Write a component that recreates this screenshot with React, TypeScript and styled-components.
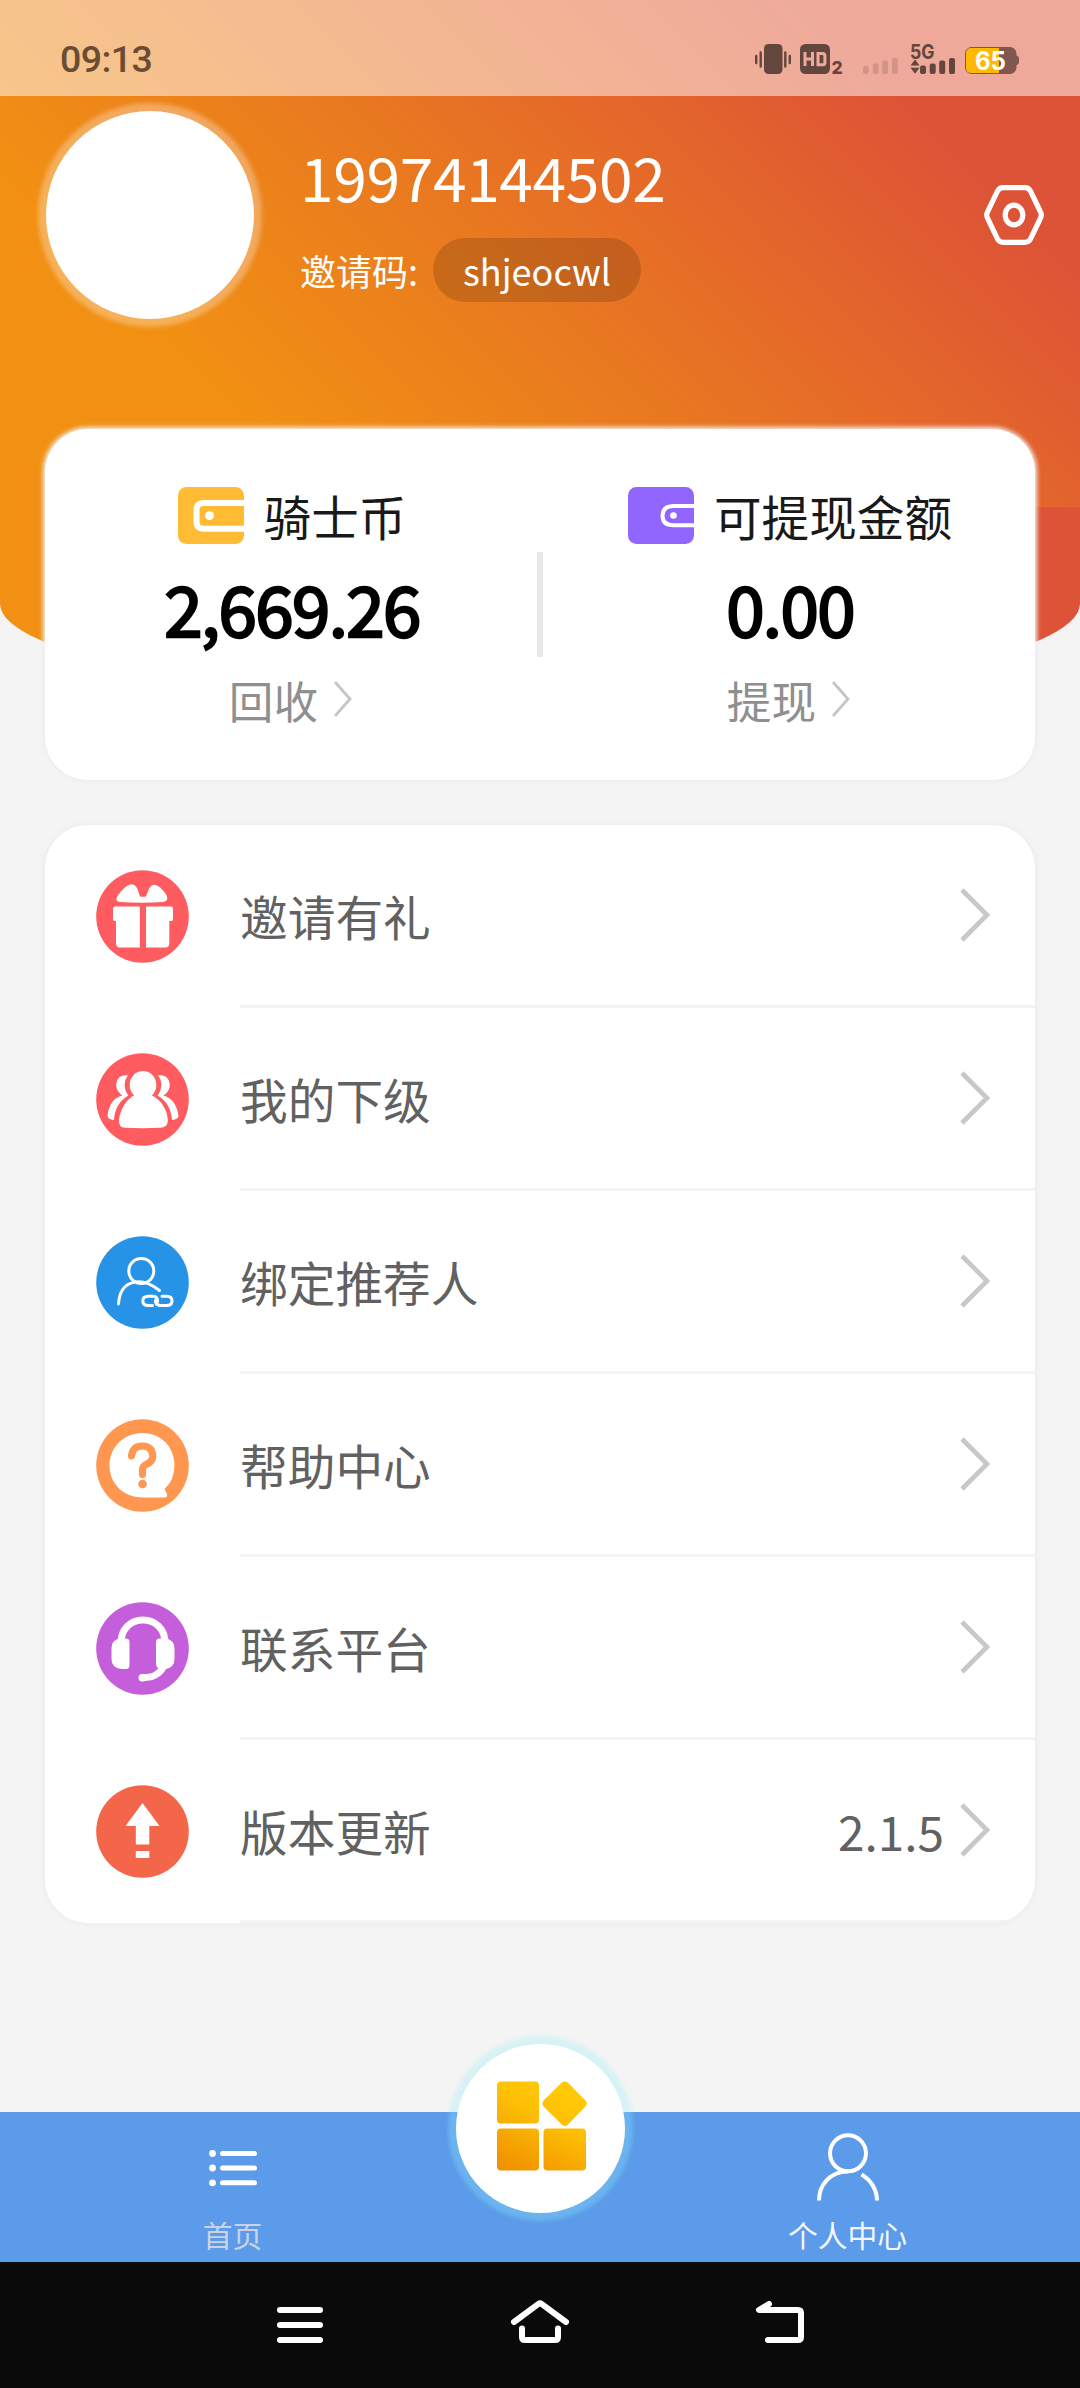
import React from 'react';
import styled, { createGlobalStyle } from 'styled-components';

const GlobalStyle = createGlobalStyle`
  * { box-sizing: border-box; }
  body {
    margin: 0;
    background: #f5f5f5;
    font-family: 'Noto Sans CJK SC', 'Noto Sans', sans-serif;
  }
  svg { display: block; flex: none; }
`;

const Screen = styled.div`
  width: 1080px;
  height: 2388px;
  display: flex;
  flex-direction: column;
  background: #f4f4f4;
  overflow: hidden;
`;

const Header = styled.header`
  flex: none;
  height: 507px;
  background: linear-gradient(45deg, #f29013 21%, #e97a1f 46%, #e4662b 65%, #dd5337 83%);
`;

const StatusBar = styled.div`
  height: 96px;
  padding: 24px 61px 0 60px;
  display: flex;
  justify-content: space-between;
  background: rgba(255, 255, 255, 0.5);
`;

const Clock = styled.span`
  font: 500 37.5px/71px Roboto, sans-serif;
  letter-spacing: -0.6px;
  color: #694c31;
`;

const HeaderCurve = styled.div`
  flex: none;
  height: 193px;
  border-radius: 0 0 50% 50%;
  background: linear-gradient(45deg, #f29013 22%, #dd5337 83%);
`;

const Profile = styled.section`
  display: flex;
  align-items: center;
  height: 237px;
  padding: 0 36px 0 46px;
`;

const Avatar = styled.div`
  width: 208px;
  height: 208px;
  border-radius: 50%;
  background: #fff;
  box-shadow: 0 0 4px 8px rgba(255, 255, 255, 0.3);
`;

const Identity = styled.div`
  flex: 1;
  margin-left: 46px;
  padding-top: 4px;
`;

const Phone = styled.div`
  font-size: 60.5px;
  line-height: 88px;
  letter-spacing: -0.35px;
  color: #fff;
`;

const InviteRow = styled.div`
  display: flex;
  align-items: center;
  margin-top: 18px;
  font-size: 36px;
  color: #fff;
`;

const InviteCode = styled.span`
  height: 64px;
  margin-left: 15px;
  padding: 0 30px;
  border-radius: 32px;
  background: rgba(0, 0, 0, 0.15);
  font-size: 36px;
  line-height: 65px;
`;

const BalanceCard = styled.section`
  flex: none;
  width: 990px;
  height: 351px;
  margin: -271px auto 0;
  display: flex;
  align-items: center;
  border-radius: 43px;
  background: #fff;
  box-shadow: 0 0 4px 2px #eee;
`;

const Divider = styled.div`
  width: 6px;
  height: 105px;
  background: #e9e9e9;
`;

const Balance = styled.div`
  flex: 1;
  height: 100%;
  padding: 51px 0 0 2px;
  display: flex;
  flex-direction: column;
  align-items: center;
`;

const BalanceTitle = styled.div`
  display: flex;
  align-items: center;
  gap: 20px;
  height: 70px;
  font-size: 47.6px;
  line-height: 70px;
  color: #191919;
`;

const BalanceName = styled.span`
  padding-top: 2px;
`;

const Amount = styled.div`
  margin-top: 9px;
  height: 96px;
  font-size: 69px;
  line-height: 96px;
  letter-spacing: -1.6px;
  color: #000;
  -webkit-text-stroke: 2.4px #000;
`;

const BalanceAction = styled.div`
  display: flex;
  align-items: center;
  gap: 16px;
  margin-top: 13px;
  padding-right: 3px;
  font-size: 44.64px;
  line-height: 64px;
  color: #8f8f8f;
`;

const MenuCard = styled.nav`
  flex: none;
  width: 990px;
  margin: 45px auto 0;
  border-radius: 43px;
  background: #fff;
  box-shadow: 0 0 4px 2px #eee;
  overflow: hidden;
`;

const MenuRow = styled.div`
  display: flex;
  align-items: stretch;
  height: 183px;
`;

const MenuIcon = styled.div`
  width: 195px;
  padding: 45px 0 0 51px;
`;

const MenuBody = styled.div`
  flex: 1;
  display: flex;
  align-items: center;
  padding-right: 45px;
  border-bottom: 3px solid #f4f4f4;
  font-size: 47.7px;
  color: #616161;
`;

const MenuLabel = styled.span`
  flex: 1;
  padding-top: 1px;
`;

const MenuValue = styled.span`
  margin-right: 15px;
  padding-top: 1px;
`;

const TabBar = styled.footer`
  flex: none;
  display: flex;
  height: 150px;
  margin-top: auto;
  background: #5b9bea;
`;

const Tab = styled.div<{ $active?: boolean }>`
  flex: 1;
  display: flex;
  flex-direction: column;
  justify-content: space-between;
  align-items: center;
  padding: 18px 0 6px;
  font-size: 29.8px;
  line-height: 44px;
  color: ${(p) => (p.$active ? '#f2f7fd' : '#c9d3e3')};
`;

const CenterTab = styled.div`
  width: 150px;
  display: flex;
  justify-content: center;
`;

const CenterButton = styled.button`
  flex: none;
  width: 169px;
  height: 169px;
  margin-top: -68px;
  padding: 0 0 5px 3px;
  border: 0;
  border-radius: 50%;
  display: flex;
  align-items: center;
  justify-content: center;
  background: #fff;
  box-shadow: 0 0 4px 8px rgba(145, 240, 252, 0.3);
`;

const SystemNav = styled.div`
  flex: none;
  height: 126px;
  display: flex;
  align-items: center;
  justify-content: center;
  gap: 180px;
  background: #0a0a0a;
`;

const Chevron = ({ small }: { small?: boolean }) =>
  small ? (
    <svg width="18" height="38" viewBox="0 0 18 38" fill="none" stroke="#c5c5c5" strokeWidth="2.8">
      <path d="M1 1L16 18L1 35" />
    </svg>
  ) : (
    <svg width="31" height="54" viewBox="0 0 31 54" fill="none" stroke="#c8c8c8" strokeWidth="4.6">
      <path d="M3 2L28 27L3 52" />
    </svg>
  );

const StatusIcons = () => (
  <svg width="264" height="70" viewBox="756 24 264 70" fill="#63463d">
    <rect x="765" y="44" width="18.5" height="30" rx="4.5" />
    <path d="M757.2 56v7M761.7 52.5v14M786.3 52.5v14M790.8 56v7" stroke="#63463d" strokeWidth="2.4" strokeLinecap="round" />
    <rect x="801" y="44" width="30" height="30" rx="5.5" />
    <path d="M806 52v14M813.5 52v14M806 59h7.5M819 53.4h4.5q2.4 0 2.4 2.4v6.6q0 2.4-2.4 2.4H819z" fill="none" stroke="#efaa9b" strokeWidth="3" />
    <text x="832.5" y="73.5" fontFamily="Inter" fontWeight="800" fontSize="17.5">2</text>
    <g fill="#d39388">
      <rect x="864" y="66" width="5.8" height="8" rx="2" />
      <rect x="873.8" y="63.5" width="5.8" height="10.5" rx="2" />
      <rect x="883.2" y="60.5" width="5.8" height="13.5" rx="2" />
      <rect x="893" y="58" width="5.8" height="16" rx="2" />
    </g>
    <text x="911" y="58.8" fontFamily="Inter" fontWeight="700" fontSize="20" textLength="24.5" lengthAdjust="spacingAndGlyphs">5G</text>
    <path d="M911.5 65.5L916 59.5L920.5 65.5zM911.5 67.8L916 73.8L920.5 67.8z" />
    <rect x="921" y="65.5" width="6" height="8.5" rx="2" />
    <rect x="930.7" y="63.5" width="6" height="10.5" rx="2" />
    <rect x="940.2" y="60.5" width="6" height="13.5" rx="2" />
    <rect x="950" y="58" width="6" height="16" rx="2" />
    <rect x="966" y="47" width="51.5" height="27" rx="6.5" fill="#80564f" />
    <path d="M1017 55.5q3 .5 3 3v3.5q0 2.5-3 3z" fill="#80564f" />
    <path d="M1000 48V73H972.5q-5.5 0-5.5-5.5v-14q0-5.5 5.5-5.5z" fill="#feb902" />
    <text x="976" y="70" fill="#fff" fontFamily="Inter" fontWeight="700" fontSize="25.5" textLength="31" lengthAdjust="spacingAndGlyphs">65</text>
  </svg>
);

const SettingsIcon = () => (
  <svg width="60" height="60" viewBox="0 0 60 60" fill="none" stroke="#fff" strokeWidth="5.2">
    <path d="M19 2.6H41Q44.5 2.6 46.3 5.7L56.3 26.5Q58.3 30 56.3 33.5L46.3 54.3Q44.5 57.4 41 57.4H19Q15.5 57.4 13.7 54.3L3.7 33.5Q1.7 30 3.7 26.5L13.7 5.7Q15.5 2.6 19 2.6Z" />
    <ellipse cx="30" cy="30" rx="8.8" ry="9.9" />
  </svg>
);

const CoinWallet = () => (
  <svg width="66" height="57" viewBox="0 0 66 57">
    <rect width="66" height="57" rx="8.5" fill="#ffbb33" />
    <path d="M66 16H25.5Q18.5 16 18.5 23V34.5Q18.5 41.7 25.5 41.7H66" fill="none" stroke="#fff" strokeWidth="6" />
    <circle cx="31.5" cy="28.7" r="4.4" fill="#fff" />
  </svg>
);

const CashWallet = () => (
  <svg width="66" height="57" viewBox="0 0 66 57">
    <rect width="66" height="57" rx="8.5" fill="#9066ff" />
    <path d="M66 19H45.5Q34.5 19 34.5 28.7Q34.5 38.2 45.5 38.2H66" fill="none" stroke="#fff" strokeWidth="4" />
    <circle cx="45.5" cy="28.5" r="3.3" fill="#fff" />
  </svg>
);

const Disc = ({ color, children }: { color: string; children: React.ReactNode }) => (
  <svg width="93" height="93" viewBox="0 0 93 93" fill="#fff">
    <circle cx="46.5" cy="46.5" r="46.3" fill={color} />
    {children}
  </svg>
);

const GiftIcon = () => (
  <Disc color="#ff5c62">
    <path d="M24 32Q18 31 21.5 26Q33 10 39.5 16C42.5 19 42.5 24 44.5 26.8H49.5C51.5 24 52 19 55 16Q61 11 70.5 25Q73 31 67 32Q46 33.5 24 32Z" />
    <path d="M19 36.5H43.8V77.5H24Q20 77.5 20 73V51H18.5Q17 51 17 49V38.5Q17 36.5 19 36.5Z" />
    <path d="M50 36.5H75Q77 36.5 77 38.5V49Q77 51 75.5 51H73.3V73Q73.3 77.5 69.5 77.5H50Z" />
  </Disc>
);

const TeamIcon = () => (
  <Disc color="#ff5c62">
    <path d="M32 22.5C22 20 17.5 31 22 38Q24 41 26.5 42.5C14.5 45 12 58 11.5 63Q12 66.5 18 67C18.5 56 24 47 32.5 42.5C27 36 28 27 32 22.5Z" />
    <path d="M62 22.5C72 20 76.5 31 72 38Q70 41 67.5 42.5C79.5 46 82 58 82.5 63Q82 66.5 76 67C75.5 56 70 47 61.5 42.5C67 36 66 27 62 22.5Z" />
    <ellipse cx="47" cy="32" rx="13.3" ry="14" />
    <path d="M39 42H55C68 48 72 61 71.8 68Q71.5 74.5 64 74.8Q47 75.5 29 74.8Q22.5 74.5 23 67C24 57 30 46 39 42Z" />
  </Disc>
);

const LinkUserIcon = () => (
  <Disc color="#2793e6">
    <g fill="none" stroke="#fff" strokeWidth="3" strokeLinecap="round">
      <circle cx="45.3" cy="35" r="12.5" />
      <path d="M22.5 68C24 43.5 45 40 63.5 54.5" />
      <path d="M56.5 69.5H52.5Q46.8 69.5 46.8 65Q46.8 60.2 52.5 60.2H57Q60.5 60.2 61.5 63.5Q62 65.5 60.5 66.5" />
      <path d="M66 60.2H70.5Q76 60.2 76 65Q76 69.5 70.5 69.5H65Q60.5 69.5 59.5 66Q59.2 64.5 60 63.8" />
    </g>
  </Disc>
);

const HelpIcon = () => (
  <Disc color="#ff9751">
    <path d="M46.5 14C65 14 78.5 28 78.5 46.5Q78.5 61 68.5 70L71 75Q71.5 78.5 69 78.5H46.5C27 78.5 13.5 64 13.5 46.5C13.5 28 28 14 46.5 14Z" />
    <path d="M35.5 37Q36.5 27 46.5 27Q56.5 27.5 56.8 37Q57 42.5 50 45.5Q46.5 47 46.5 51V55.5" fill="none" stroke="#ff9751" strokeWidth="7" strokeLinecap="round" />
    <circle cx="46.5" cy="65" r="4.3" fill="#ff9751" />
  </Disc>
);

const SupportIcon = () => (
  <Disc color="#c55edb">
    <path d="M25 42C24 10 70 10 69 42" fill="none" stroke="#fff" strokeWidth="7" />
    <path d="M23.5 36.5H30Q33.5 36.5 33.5 40V63Q33.5 67 30 67H26Q15.5 66.5 15.5 57V46Q15.5 38 23.5 36.5ZM63.5 36.5H70Q78.5 38 78.5 46V57Q78.5 65 70 67C67 73 60 78.5 50.5 78.8Q48.5 79.5 46 79.5Q42.5 79.3 42.5 75.5Q42.5 72 46 72H50C56 72 60 69 62.5 66Q60 65 60 62V40Q60 36.5 63.5 36.5Z" />
  </Disc>
);

const UpdateIcon = () => (
  <Disc color="#f46649">
    <path d="M46.5 18L63.5 41H53.3V59.5H39.8V41H29.5ZM39.8 66H53.3V73H39.8Z" />
  </Disc>
);

const ListIcon = () => (
  <svg width="48" height="64" viewBox="1.5 0 48 64" fill="#fff">
    {[23.5, 38, 52.8].map((y) => (
      <g key={y}>
        <circle cx="5" cy={y} r="3.4" />
        <rect x="12.5" y={y - 2.5} width="37" height="5" rx="2.5" />
      </g>
    ))}
  </svg>
);

const PersonIcon = () => (
  <svg width="64" height="72" viewBox="0 0 64 72" fill="none" stroke="#fff" strokeWidth="4">
    <circle cx="32" cy="23.3" r="18" />
    <path d="M3 70.5C3 55 14 41.5 32 41.5M45.5 44.5C55 50 61 60 61 70.5" />
  </svg>
);

const AppsIcon = () => (
  <svg width="90" height="90" viewBox="0 0 90 90">
    <defs>
      <linearGradient id="apps" gradientUnits="userSpaceOnUse" x1="62" y1="12" x2="22" y2="90">
        <stop offset="0" stopColor="#ffc907" />
        <stop offset="0.35" stopColor="#fdbd05" />
        <stop offset="1" stopColor="#f09300" />
      </linearGradient>
    </defs>
    <g fill="url(#apps)">
      <rect x="0" y="0.5" width="42" height="42" rx="4" />
      <rect x="0" y="47.5" width="42" height="42" rx="4" />
      <rect x="46.5" y="47.5" width="42.5" height="42" rx="4" />
      <path d="M64.8 1.5Q67.8-.5 70.8 1.5L88.5 19.5Q91 22.5 88.5 25.5L71 43.5Q67.8 46.5 64.8 43.5L46.5 25.5Q44.5 22.5 46.5 19.5Z" />
    </g>
  </svg>
);

const NavIcon = styled.svg`
  fill: none;
  stroke: #fff;
  stroke-width: 6;
  stroke-linecap: round;
  stroke-linejoin: round;
`;

const MENU = [
  { label: '邀请有礼', icon: <GiftIcon /> },
  { label: '我的下级', icon: <TeamIcon /> },
  { label: '绑定推荐人', icon: <LinkUserIcon /> },
  { label: '帮助中心', icon: <HelpIcon /> },
  { label: '联系平台', icon: <SupportIcon /> },
  { label: '版本更新', icon: <UpdateIcon />, value: '2.1.5' },
];

export default function App() {
  return (
    <Screen>
      <GlobalStyle />
      <Header>
        <StatusBar>
          <Clock>09:13</Clock>
          <StatusIcons />
        </StatusBar>
        <Profile>
          <Avatar />
          <Identity>
            <Phone>19974144502</Phone>
            <InviteRow>
              邀请码:
              <InviteCode>shjeocwl</InviteCode>
            </InviteRow>
          </Identity>
          <SettingsIcon />
        </Profile>
      </Header>
      <HeaderCurve />

      <BalanceCard>
        <Balance>
          <BalanceTitle>
            <CoinWallet />
            <BalanceName>骑士币</BalanceName>
          </BalanceTitle>
          <Amount>2,669.26</Amount>
          <BalanceAction>
            回收
            <Chevron small />
          </BalanceAction>
        </Balance>
        <Divider />
        <Balance>
          <BalanceTitle>
            <CashWallet />
            <BalanceName>可提现金额</BalanceName>
          </BalanceTitle>
          <Amount>0.00</Amount>
          <BalanceAction>
            提现
            <Chevron small />
          </BalanceAction>
        </Balance>
      </BalanceCard>

      <MenuCard>
        {MENU.map((item) => (
          <MenuRow key={item.label}>
            <MenuIcon>{item.icon}</MenuIcon>
            <MenuBody>
              <MenuLabel>{item.label}</MenuLabel>
              {item.value && <MenuValue>{item.value}</MenuValue>}
              <Chevron />
            </MenuBody>
          </MenuRow>
        ))}
      </MenuCard>

      <TabBar>
        <Tab>
          <ListIcon />
          <span>首页</span>
        </Tab>
        <CenterTab>
          <CenterButton>
            <AppsIcon />
          </CenterButton>
        </CenterTab>
        <Tab $active>
          <PersonIcon />
          <span>个人中心</span>
        </Tab>
      </TabBar>

      <SystemNav>
        <NavIcon width="60" height="60" viewBox="0 0 60 60">
          <path d="M10 15H50M10 30H50M10 45H50" />
        </NavIcon>
        <NavIcon width="60" height="60" viewBox="0 0 60 60">
          <path d="M4 27L28.5 8.8Q30 7.7 31.5 8.8L56 27M12 33.5V42Q12 45 15 45H45Q48 45 48 42V33.5" />
        </NavIcon>
        <NavIcon width="60" height="60" viewBox="0 0 60 60">
          <path d="M19 9L9 15H48Q51 15 51 18V42Q51 45 48 45H18" />
        </NavIcon>
      </SystemNav>
    </Screen>
  );
}
